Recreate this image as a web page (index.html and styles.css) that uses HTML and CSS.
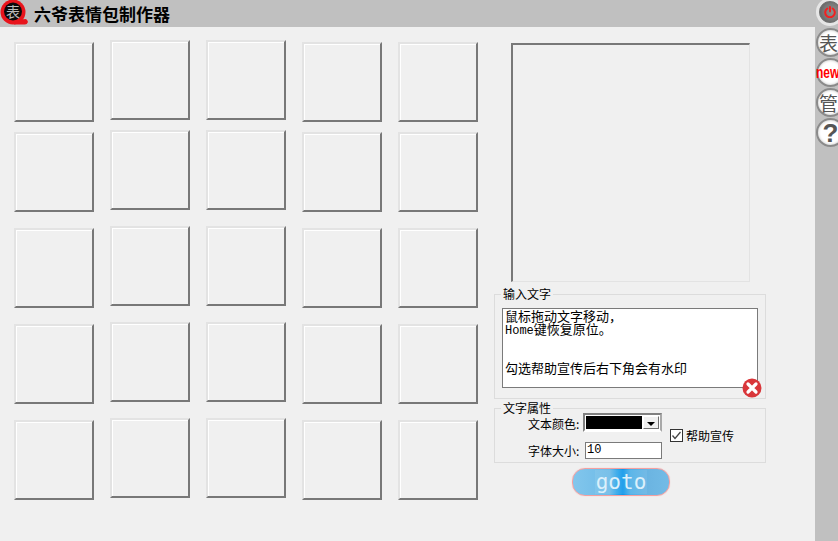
FILE: index.html
```html
<!DOCTYPE html>
<html lang="zh">
<head>
<meta charset="utf-8">
<title>六爷表情包制作器</title>
<link rel="stylesheet" href="styles.css">
</head>
<body>
<div class="app">
  <main class="main">
    <header class="titlebar">
      <svg class="logo" viewBox="0 0 28 27" width="28" height="27">
        <circle cx="13" cy="12" r="12.500" fill="#e8141c"/>
        <path d="M14 20 L26 19 Q27.500 20 28 22 Q27 24.500 25 24.500 L14 24.500 Z" fill="#e8141c"/>
        <circle cx="13" cy="11.500" r="9" fill="#0a0a0a"/>
        <text x="13" y="17" class="logo-text" text-anchor="middle">表</text>
      </svg>
      <h1 class="title">六爷表情包制作器</h1>
    </header>
    <div class="content">
      <section class="grid">
        <div class="col col-low"><div class="cell"></div><div class="cell"></div><div class="cell"></div><div class="cell"></div><div class="cell"></div></div>
        <div class="col"><div class="cell"></div><div class="cell"></div><div class="cell"></div><div class="cell"></div><div class="cell"></div></div>
        <div class="col"><div class="cell"></div><div class="cell"></div><div class="cell"></div><div class="cell"></div><div class="cell"></div></div>
        <div class="col col-low"><div class="cell"></div><div class="cell"></div><div class="cell"></div><div class="cell"></div><div class="cell"></div></div>
        <div class="col col-low"><div class="cell"></div><div class="cell"></div><div class="cell"></div><div class="cell"></div><div class="cell"></div></div>
      </section>
      <section class="side">
        <div class="preview"></div>
        <fieldset class="group group-text">
          <legend class="legend">输入文字</legend>
          <div class="textbox">
            <div class="line">鼠标拖动文字移动，</div>
            <div class="line"><span class="latin">Home</span>键恢复原位。</div>
            <div class="line"></div>
            <div class="line"></div>
            <div class="line">勾选帮助宣传后右下角会有水印</div>
          </div>
          <svg class="clear" viewBox="0 0 20 20" width="20" height="20">
            <circle cx="10" cy="10" r="9.500" fill="#d9363a"/>
            <path d="M6 6 L14 14 M14 6 L6 14" stroke="#fff" stroke-width="3.200" stroke-linecap="round"/>
          </svg>
        </fieldset>
        <fieldset class="group group-attr">
          <legend class="legend">文字属性</legend>
          <div class="attr-rows">
            <div class="attr-labels">
              <div class="attr-row">
                <span class="attr-label label-color">文本颜色:</span>
                <div class="color-select"><span class="swatch"></span><span class="arrow"></span></div>
              </div>
              <div class="attr-row attr-row-size">
                <span class="attr-label">字体大小:</span>
                <div class="size-input">10</div>
              </div>
            </div>
            <label class="check">
              <svg class="checkbox" viewBox="0 0 13 13" width="13" height="13"><rect x="0.500" y="0.500" width="12" height="12" fill="#fff" stroke="#333"/><path d="M2.500 6.500 L5 9.500 L10.500 3" fill="none" stroke="#444" stroke-width="1.300"/></svg>
              <span>帮助宣传</span>
            </label>
          </div>
        </fieldset>
        <button class="goto" type="button"><span class="goto-text">goto</span></button>
      </section>
    </div>
  </main>
  <aside class="rail">
    <div class="rail-btn power">
      <svg viewBox="0 0 12 12" width="12" height="12"><path d="M3.300 2.500 A4.800 4.800 0 1 0 8.700 2.500" fill="none" stroke="#f32020" stroke-width="2" stroke-linecap="round"/><path d="M6 1 V5.500" stroke="#f32020" stroke-width="2" stroke-linecap="round"/></svg>
    </div>
    <div class="rail-btn glyph">表</div>
    <div class="rail-btn new"><span class="new-text">new</span></div>
    <div class="rail-btn glyph">管</div>
    <div class="rail-btn help">?</div>
  </aside>
</div>
</body>
</html>
```
FILE: styles.css
```css
* { box-sizing: border-box; }
html, body { margin: 0; padding: 0; }
body {
  width: 838px;
  height: 541px;
  overflow: hidden;
  background: #f0f0f0;
  font-family: "Noto Sans CJK SC", "Liberation Sans", sans-serif;
  color: #000;
}
.app { display: flex; width: 838px; height: 541px; }
.main { width: 815px; flex: none; }
.titlebar {
  height: 27px;
  background: #c0c0c0;
  display: flex;
  align-items: center;
}
.logo { flex: none; }
.logo-text { font-size: 14px; fill: #bbb; font-family: "Noto Sans CJK SC", sans-serif; }
.title {
  margin: 0 0 0 6px;
  font-size: 17px;
  font-weight: 700;
  line-height: 22px;
  letter-spacing: 0;
}
.content { display: flex; }
.grid { display: flex; gap: 16px; padding-left: 14px; width: 494px; flex: none; }
.col { display: flex; flex-direction: column; gap: 16px; padding-top: 13px; }
.col-low { padding-top: 15px; }
.cell {
  width: 80px;
  height: 80px;
  background: #f0f0f0;
  border-style: solid;
  border-width: 2px;
  border-color: #e3e3e3 #787878 #787878 #e3e3e3;
  box-shadow: inset 1px 1px 0 #fff;
}
.cell:first-child { margin-bottom: -6px; }
.side { width: 272px; display: flex; flex-direction: column; flex: none; }
.preview {
  width: 239px;
  height: 239px;
  margin: 16px 0 0 17px;
  border-style: solid;
  border-width: 2px 1px 1px 2px;
  border-color: #787878 #e3e3e3 #e3e3e3 #787878;
}
.group {
  margin: 0;
  padding: 0;
  border: 1px solid #dcdcdc;
  min-width: 0;
  position: relative;
}
.legend {
  margin-left: 6px;
  padding: 0 2px;
  font-size: 12px;
  line-height: 14px;
  height: 14px;
}
.group-text { margin-top: 5px; height: 112px; }
.textbox {
  width: 256px;
  height: 80px;
  margin: 7px 0 0 7px;
  padding: 0 2px;
  background: #fff;
  border: 1px solid #7a7a7a;
  font-size: 13px;
}
.line { height: 13px; line-height: 13px; white-space: nowrap; }
.latin { font-family: "Liberation Mono", monospace; font-size: 12px; }
.clear { position: absolute; left: 247px; top: 77px; }
.group-attr { margin-top: 2px; height: 62px; }
.attr-rows { display: flex; margin-top: -2px; }
.attr-labels { width: 172px; flex: none; }
.attr-row { display: flex; align-items: center; }
.attr-label { width: 88px; flex: none; padding-left: 33px; font-size: 12px; line-height: 14px; white-space: nowrap; }
.label-color { padding-top: 3px; }
.color-select {
  width: 79px;
  height: 19px;
  display: flex;
  border-style: solid;
  border-width: 2px;
  border-color: #808080 #a8a8a8 #ffffff #808080;
  background: #fff;
  padding: 1px;
  gap: 1px;
}
.swatch { width: 56px; background: #000; }
.arrow {
  flex: 1;
  background: #f0f0f0;
  border: 1px solid;
  border-color: #fff #707070 #707070 #fff;
  position: relative;
}
.arrow::after {
  content: "";
  position: absolute;
  left: 3px;
  top: 5px;
  border: 4px solid transparent;
  border-top-color: #000;
  border-bottom-width: 0;
}
.attr-row-size { margin-top: 10px; }
.size-input {
  width: 77px;
  height: 17px;
  border: 1px solid #7a7a7a;
  background: #fff;
  font-family: "Liberation Mono", monospace;
  font-size: 12px;
  line-height: 15px;
  padding-left: 1px;
  margin-left: 2px;
}
.check { display: flex; align-items: center; gap: 3px; font-size: 12px; margin-top: 14px; margin-left: 3px; height: 16px; }
.checkbox { flex: none; }
.goto {
  display: block;
  width: 98px;
  height: 28px;
  margin: 5px 0 0 78px;
  padding: 0 0 1px 22px;
  border: 1px solid #f4a0a0;
  border-radius: 13px;
  box-shadow: 0 0 1px #f4b0b0;
  background: linear-gradient(90deg, #82c6ec 0%, #6ebbe8 38%, #2fa6ea 46%, #0f97ea 52%, #4fb0e8 60%, #6cb5e2 80%, #72bbe6 100%);
  cursor: pointer;
  text-align: left;
}
.goto-text {
  display: block;
  width: 52px;
  font-family: "DejaVu Sans Mono", monospace;
  font-size: 21px;
  line-height: 24px;
  color: #dcf0fb;
  text-align: center;
  background: rgba(255, 255, 255, 0.08);
}
.rail {
  width: 23px;
  flex: none;
  background: #c0c0c0;
  display: flex;
  flex-direction: column;
  padding-top: 1px;
  overflow: hidden;
}
.rail-btn {
  width: 29px;
  height: 29px;
  margin-left: 1px;
  margin-bottom: 1px;
  flex: none;
  border-radius: 50%;
  background: #fff;
  border: 2px solid #8a8a8a;
  box-shadow: inset 0 0 3px #bbb;
  display: flex;
  align-items: center;
  justify-content: center;
  line-height: 1;
  color: #555;
}
.glyph { justify-content: flex-start; padding-left: 1px; font-size: 19px; }
.power {
  width: 22px;
  height: 22px;
  margin: 0 0 5px 4px;
  border: 1px solid #707070;
  background: radial-gradient(circle at 60% 50%, #8e8e8e 0%, #777 55%, #555 100%);
  box-shadow: 0 0 0 3px #e6e6e6;
}
.new { justify-content: flex-start; overflow: visible; }
.new-text {
  display: inline-block;
  margin-left: -2px;
  color: #f00;
  font-family: "Liberation Sans", sans-serif;
  font-weight: 700;
  font-size: 12px;
  transform: scaleY(1.3);
}
.help { font-family: "Liberation Sans", sans-serif; font-weight: 700; font-size: 26px; color: #555; }
```
